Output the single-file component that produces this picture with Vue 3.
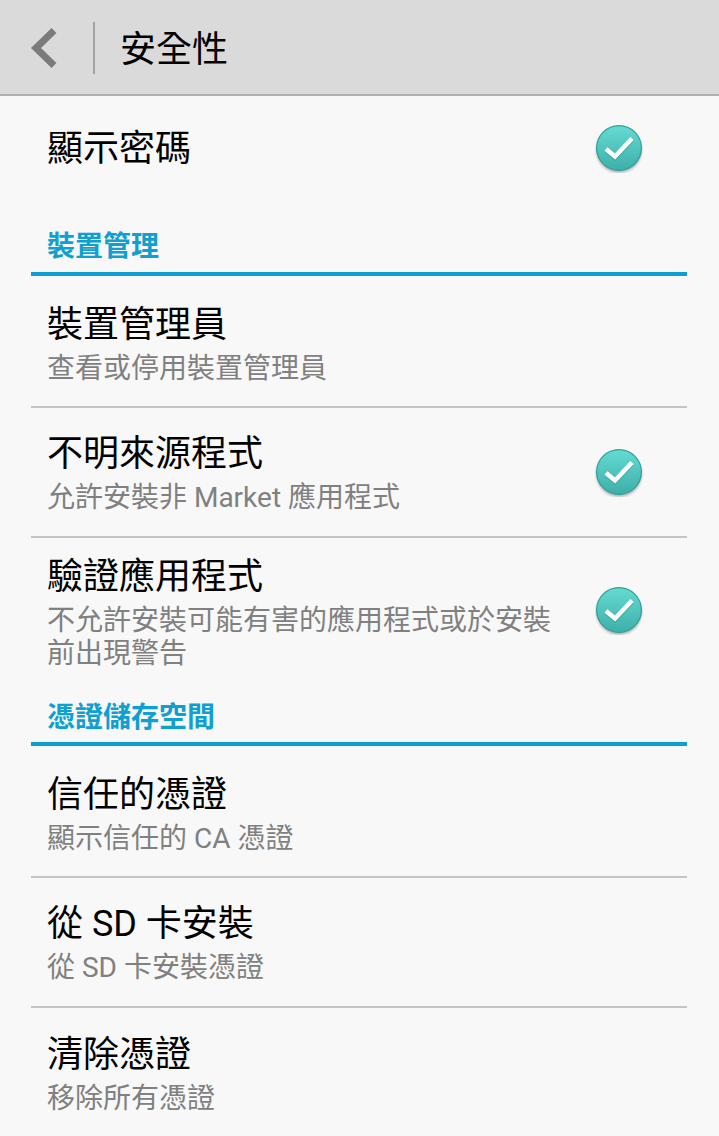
<script setup>
const rowsA = [
  { title: '裝置管理員', sub: ['查看或停用裝置管理員'], kind: 'tall', line: true },
  { title: '不明來源程式', sub: ['允許安裝非 Market 應用程式'], kind: 'short', line: true, check: true },
  { title: '驗證應用程式', sub: ['不允許安裝可能有害的應用程式或於安裝', '前出現警告'], kind: 'wide', check: true },
]
const rowsB = [
  { title: '信任的憑證', sub: ['顯示信任的 CA 憑證'], kind: 'tall', line: true },
  { title: '從 SD 卡安裝', sub: ['從 SD 卡安裝憑證'], kind: 'short', line: true },
  { title: '清除憑證', sub: ['移除所有憑證'], kind: 'short' },
]
</script>

<template>
  <div class="page">
    <svg width="0" height="0" class="defs">
      <defs>
        <linearGradient id="g" x1="0" y1="0" x2="0" y2="1">
          <stop offset="0" stop-color="#66dbd2" />
          <stop offset="1" stop-color="#3cafa9" />
        </linearGradient>
        <filter id="b" x="-20%" y="-20%" width="140%" height="140%">
          <feGaussianBlur stdDeviation="1.2" />
        </filter>
        <symbol id="chk" viewBox="0 0 50 50">
          <circle cx="25" cy="27" r="23" fill="#555" opacity=".4" filter="url(#b)" />
          <circle cx="25" cy="25" r="22.4" fill="url(#g)" stroke="#2fa098" stroke-width="1.2" />
          <path d="M12 27 L21 34.5 L38 16.5" fill="none" stroke="#1f8e88" stroke-width="5" opacity=".35" />
          <path d="M12 26 L21 33.5 L38 15.5" fill="none" stroke="#fff" stroke-width="4.5" />
        </symbol>
      </defs>
    </svg>

    <header class="bar">
      <svg class="back" viewBox="0 0 30 44" width="30" height="44"><path d="M26 4.5 L8 22 L26 39.5" fill="none" stroke="#7b7b7b" stroke-width="7" /></svg>
      <div class="sep"></div>
      <div class="bar-title">安全性</div>
    </header>

    <div class="row first">
      <div class="text"><div class="title">顯示密碼</div></div>
      <svg class="chk" width="50" height="50"><use href="#chk" /></svg>
    </div>

    <div class="section s1">裝置管理</div>
    <div v-for="r in rowsA" :key="r.title" class="row" :class="[r.kind, { line: r.line }]">
      <div class="text">
        <div class="title">{{ r.title }}</div>
        <div class="sub"><div v-for="s in r.sub" :key="s">{{ s }}</div></div>
      </div>
      <svg v-if="r.check" class="chk" width="50" height="50"><use href="#chk" /></svg>
    </div>

    <div class="section s2">憑證儲存空間</div>
    <div v-for="r in rowsB" :key="r.title" class="row" :class="[r.kind, { line: r.line }]">
      <div class="text">
        <div class="title">{{ r.title }}</div>
        <div class="sub"><div v-for="s in r.sub" :key="s">{{ s }}</div></div>
      </div>
    </div>
  </div>
</template>

<style scoped>
.page { width: 719px; height: 1136px; overflow: hidden; background: #f8f8f8; font-family: Roboto, "Noto Sans CJK TC", sans-serif; position: relative; }
.defs { position: absolute; }
.bar { height: 96px; box-sizing: border-box; padding: 2px 0 0 28px; background: #dadada; border-bottom: 2px solid #b0b0b0; display: flex; align-items: center; }
.back { flex: none; }
.sep { width: 2px; height: 52px; background: #a3a3a3; margin-left: 35px; }
.bar-title { font-size: 36px; color: #000; margin-left: 25px; line-height: 44px; padding-top: 4px; }
.row { margin: 0 32px 0 31px; display: flex; align-items: center; justify-content: space-between; padding: 0 43px 0 16px; box-sizing: border-box; }
.line { border-bottom: 2px solid #c4c4c4; }
.text { padding-top: 2px; }
.first { height: 104px; }
.tall { height: 132px; padding-top: 3px; }
.short { height: 130px; padding-top: 1px; }
.short .text { padding-top: 0; }
.short .chk { margin-bottom: 2px; }
.wide { height: 152px; padding-bottom: 8px; }
.wide .text { padding-top: 4px; }
.title { font-size: 36px; line-height: 44px; color: #000; }
.sub { font-size: 28px; line-height: 33px; color: #808080; margin-top: 5px; }
.section { margin: 0 32px 0 31px; padding-left: 16px; font-size: 28px; font-weight: 700; line-height: 36px; color: #0ea0d0; border-bottom: 4px solid #0ca0d0; }
.s1 { padding-top: 29px; padding-bottom: 7px; }
.s2 { padding-top: 10px; padding-bottom: 6px; }
</style>
